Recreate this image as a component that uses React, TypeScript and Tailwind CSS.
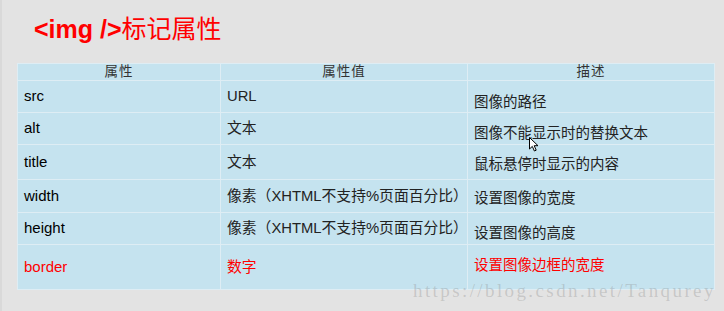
import React from "react";

type Row = {
  name: string;
  value: string;
  desc: string;
  h: string;
  c3: string;
  red?: boolean;
};

const rows: Row[] = [
  { name: "src", value: "URL", desc: "图像的路径", h: "h-[31px]", c3: "pt-[12px]" },
  { name: "alt", value: "文本", desc: "图像不能显示时的替换文本", h: "h-[31px]", c3: "pt-[10px]" },
  { name: "title", value: "文本", desc: "鼠标悬停时显示的内容", h: "h-[34px]", c3: "pt-[6px]" },
  { name: "width", value: "像素（XHTML不支持%页面百分比）", desc: "设置图像的宽度", h: "h-[32px]", c3: "pt-[6px]" },
  { name: "height", value: "像素（XHTML不支持%页面百分比）", desc: "设置图像的高度", h: "h-[31px]", c3: "pt-[10px]" },
  { name: "border", value: "数字", desc: "设置图像边框的宽度", h: "h-[44px]", c3: "pt-[0px] pb-[2px]", red: true },
];

const font = "font-['Liberation_Sans','Noto_Sans_CJK_SC',sans-serif]";

export default function App() {
  return (
    <div className={`relative w-[724px] h-[311px] overflow-hidden bg-[#e3e3e3] flex ${font}`}>
      <div className="w-[2px] h-full bg-[#d9d9d9]" />
      <div className="flex flex-col">
        <div className="mt-[15px] ml-[32px] h-[28px] leading-[28px] text-[#f00] whitespace-nowrap">
          <span className="font-bold text-[25px]">&lt;img /&gt;</span>
          <span className="text-[25px]">标记属性</span>
        </div>
        <div className="mt-[20px] ml-[15px] w-[698px] grid grid-cols-[202px_246px_246px] gap-px p-px bg-[#deedf4]">
          {["属性", "属性值", "描述"].map((t) => (
            <div
              key={t}
              className="h-[16px] bg-[#c5e3ef] flex items-center justify-center text-[13.5px] leading-[16px] text-[#333] tracking-[1px]"
            >
              {t}
            </div>
          ))}
          {rows.map((r) => (
            <React.Fragment key={r.name}>
              <div
                className={`${r.h} bg-[#c5e3ef] flex items-center pl-[6px] text-[15px] ${
                  r.red ? "text-[#f00]" : "text-black"
                }`}
              >
                {r.name}
              </div>
              <div
                className={`${r.h} bg-[#c5e3ef] flex items-center pl-[6px] text-[14.8px] whitespace-nowrap ${
                  r.red ? "text-[#f00]" : "text-[#222]"
                }`}
              >
                {r.value}
              </div>
              <div
                className={`${r.h} ${r.c3} bg-[#c5e3ef] flex items-center pl-[6px] text-[14.5px] whitespace-nowrap ${
                  r.red ? "text-[#f00]" : "text-[#222]"
                }`}
              >
                {r.desc}
              </div>
            </React.Fragment>
          ))}
        </div>
      </div>

      {/* mouse cursor */}
      <svg
        className="absolute left-[529px] top-[137px]"
        width="11"
        height="15"
        viewBox="0 0 11 15"
      >
        <path d="M0.5 0.5 L0.5 12 L3.3 9.4 L5.4 14 L7.2 13.2 L5.2 8.7 L9 8.7 Z" fill="#fff" stroke="#000" strokeWidth="1" strokeLinejoin="round" />
      </svg>

      {/* watermark */}
      <div className="absolute left-[413px] top-[279px] text-[19px] leading-[24px] tracking-[2.4px] whitespace-nowrap font-['Liberation_Serif',serif] text-[rgba(140,140,140,0.32)]">
        https://blog.csdn.net/Tanqurey
      </div>
    </div>
  );
}
